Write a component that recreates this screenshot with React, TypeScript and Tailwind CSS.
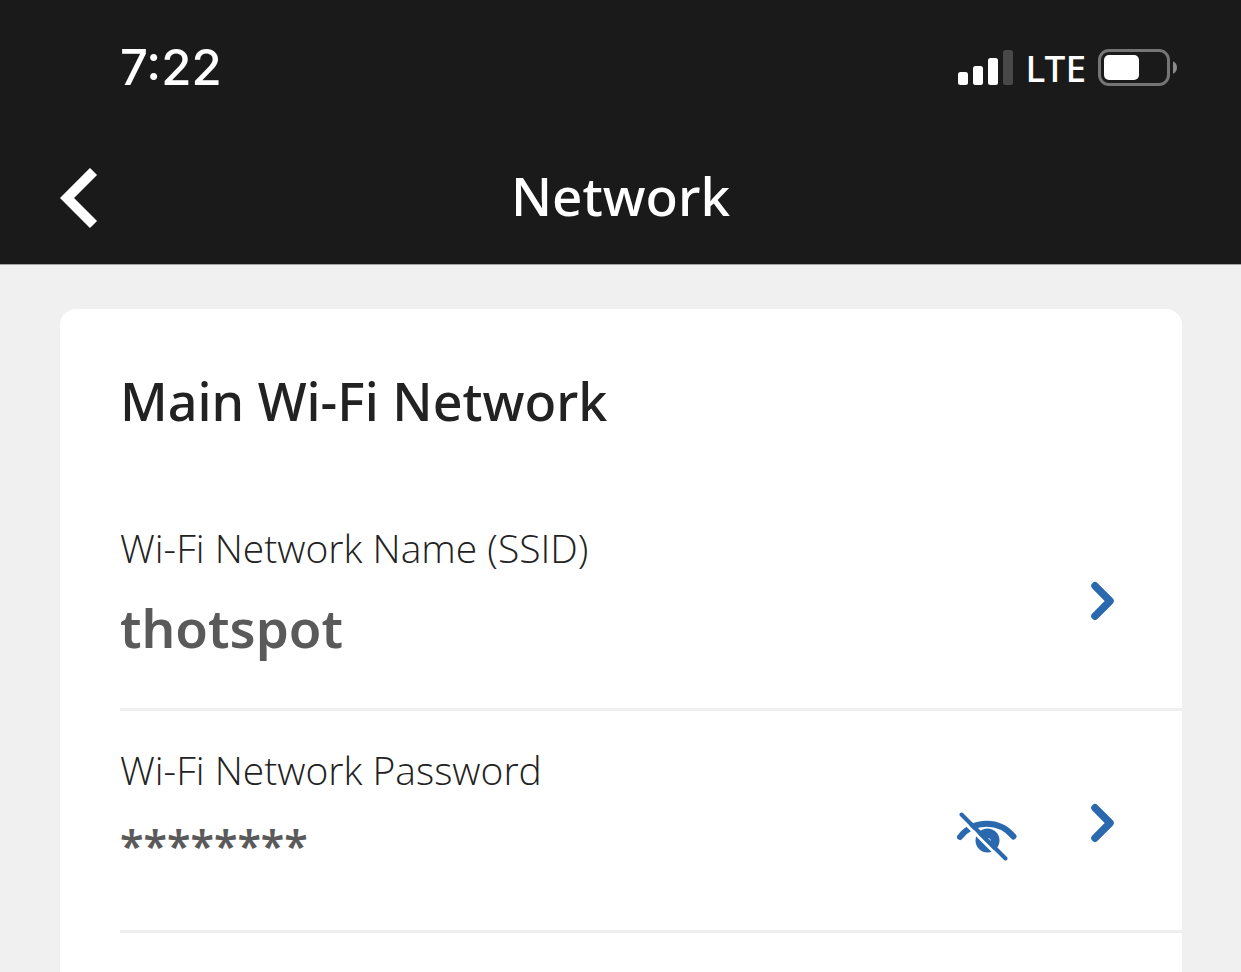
import { useState } from "react";
import type { ReactNode } from "react";

function SignalIcon() {
  return (
    <svg width="56" height="36" viewBox="0 0 56 36" role="img" aria-label="Signal strength, three of four bars">
      <g fill="#fff">
        <rect x="0" y="22" width="10" height="13" rx="2.5" />
        <rect x="15" y="16" width="10" height="19" rx="2.5" />
        <rect x="30" y="8" width="10" height="27" rx="2.5" />
      </g>
      <rect x="45" y="0" width="10" height="35" rx="2.5" fill="#484848" />
    </svg>
  );
}

function BatteryIcon() {
  return (
    <svg width="80" height="38" viewBox="0 0 80 38" role="img" aria-label="Battery half full">
      <rect x="1.5" y="1.5" width="69" height="34" rx="9.5" fill="none" stroke="#757575" strokeWidth="3" />
      <rect x="6" y="6" width="35" height="25" rx="5" fill="#fff" />
      <path d="M75 12.2C77.6 13.5 79 15.8 79 18.5S77.6 23.5 75 24.8Z" fill="#8a8a8a" />
    </svg>
  );
}

function BackIcon() {
  return (
    <svg width="38" height="60" viewBox="0 0 38 60" aria-hidden="true">
      <path d="M33.5 3.5 7 30 33.5 56.5" fill="none" stroke="#fff" strokeWidth="10" />
    </svg>
  );
}

function ChevronIcon() {
  return (
    <svg width="24" height="40" viewBox="0 0 24 40" aria-hidden="true">
      <path d="M5 4.8 20 20 5 35.2" fill="none" stroke="#2b69ae" strokeWidth="7.5" strokeLinecap="round" strokeLinejoin="round" />
    </svg>
  );
}

function EyeOffIcon() {
  return (
    <svg width="60" height="50" viewBox="0 0 60 50" aria-hidden="true">
      <path d="M3 26C17 8.5 42 8.5 56.5 25.5" fill="none" stroke="#2b69ae" strokeWidth="6" strokeLinecap="round" />
      <circle cx="30.5" cy="29.5" r="12" fill="#2b69ae" />
      <path d="M5 9.3 44 48.3" stroke="#fff" strokeWidth="3" />
      <path d="M31 27.5C33.5 27.5 34 29.5 33 30.5Z" fill="#fff" stroke="#fff" strokeWidth="0.6" />
      <path d="M4.5 3.5 48.5 47.5" stroke="#2b69ae" strokeWidth="4" strokeLinecap="round" />
    </svg>
  );
}

type SettingRowProps = {
  label: string;
  value: string;
  masked?: boolean;
  action?: ReactNode;
};

function SettingRow({ label, value, masked = false, action }: SettingRowProps) {
  return (
    <li className="flex items-start justify-between border-b-3 border-[#efefef] pt-[33px] pr-16">
      <dl className="h-[186px]">
        <dt className="font-['Open_Sans',sans-serif] text-[39px] leading-[52px] font-light text-[#222]">{label}</dt>
        <dd className={(masked ? "text-[43px] leading-[64px]" : "text-[53px] leading-[72px]") + " mt-[18px] font-semibold text-[#5a5a5a]"}>
          {value}
        </dd>
      </dl>
      <div className="flex items-start gap-[69px] pt-[55px]">
        {action}
        <a href="#edit" aria-label={"Edit " + label} className="p-1">
          <ChevronIcon />
        </a>
      </div>
    </li>
  );
}

export default function App() {
  const [hidden, setHidden] = useState(true);
  return (
    <div className="flex min-h-screen flex-col bg-[#f0f0f0] font-['Noto_Sans',sans-serif]">
      <header className="border-b border-[#a5a5a5] bg-[#1a1a1a] text-white">
        <div className="flex h-34 items-center justify-between pr-[63px] pl-30">
          <time className="font-['Inter',sans-serif] text-[49px] leading-[56px] font-medium">7:22</time>
          <div className="flex items-center gap-3">
            <SignalIcon />
            <span className="text-[37px] leading-[48px] font-medium">LTE</span>
            <BatteryIcon />
          </div>
        </div>
        <div className="grid h-32 grid-cols-[1fr_auto_1fr] items-center px-15 pb-1">
          <button type="button" aria-label="Back" className="justify-self-start">
            <BackIcon />
          </button>
          <h1 className="pb-1 text-[53px] leading-[72px] font-medium">Network</h1>
        </div>
      </header>
      <main className="flex flex-1 flex-col pt-11 pr-[59px] pl-15">
        <section className="flex-1 rounded-t-2xl bg-white pl-15">
          <h2 className="pt-14 pb-13 text-[52px] leading-[72px] font-medium text-[#222]">Main Wi-Fi Network</h2>
          <ul>
            <SettingRow label="Wi-Fi Network Name (SSID)" value="thotspot" />
            <SettingRow
              label="Wi-Fi Network Password"
              value="********"
              masked
              action={
                <button
                  type="button"
                  aria-label="Show password"
                  aria-pressed={!hidden}
                  onClick={() => setHidden(!hidden)}
                  className="mt-3"
                >
                  <EyeOffIcon />
                </button>
              }
            />
          </ul>
        </section>
      </main>
    </div>
  );
}
